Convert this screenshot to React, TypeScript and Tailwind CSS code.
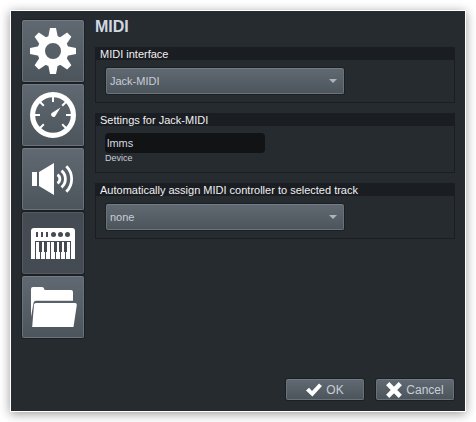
import type { ReactNode } from "react";

const frame = "rounded-[2px] border shadow-[0_0_0_1px_#1c2024]";
const raised = `${frame} border-[#6b737a] border-t-[#747c83] bg-linear-to-b from-[#606871] to-[#4d555c]`;
const pressed = `${frame} border-[#555b61] bg-[#454b52]`;

function Gear() {
  return (
    <svg width="46" height="46" viewBox="-23 -23 46 46" fill="#fff">
      {[0, 45, 90, 135, 180, 225, 270, 315].map((a) => (
        <path key={a} d="M-5-13L-3-23H3L5-13Z" transform={`rotate(${a})`} />
      ))}
      <circle r="11.8" fill="none" stroke="#fff" strokeWidth="7.6" />
    </svg>
  );
}

function Gauge() {
  return (
    <svg width="46" height="46" viewBox="-23 -23 46 46" fill="#fff">
      <circle r="20.4" fill="none" stroke="#fff" strokeWidth="5.2" />
      {[-135, -90, -45, 0, 45, 90, 135].map((a) => (
        <path key={a} d="M0-19V-13" stroke="#fff" strokeWidth="2" transform={`rotate(${a})`} />
      ))}
      <path d="M7.5-7.5L2.2 1.2A2.4 2.4 0 1 1-1.3-2.1Z" />
    </svg>
  );
}

function Speaker() {
  return (
    <svg width="44" height="34" viewBox="0 0 44 34" fill="#fff">
      <path d="M1 10H6V24H1ZM8 10L23 1V33L8 24Z" />
      <g fill="none" stroke="#fff" strokeWidth="2.8">
        <path d="M26.4 12.8A4.8 4.8 0 0 1 26.4 21.2" />
        <path d="M30.5 8.6A11 11 0 0 1 30.5 25.4" />
        <path d="M35.3 4.2A18 18 0 0 1 35.3 29.8" />
      </g>
    </svg>
  );
}

function Keyboard() {
  return (
    <svg width="44" height="31" viewBox="0 0 44 31">
      <path d="M0 31V3Q0 0 3 0H41Q44 0 44 3V31Z" fill="#fff" />
      <g fill="#454b52">
        <path d="M5 4H7V9H5ZM10 4H12V9H10ZM15 4H17V9H15Z" />
        <circle cx="22.5" cy="6.5" r="2.5" />
        <circle cx="29.5" cy="6.5" r="2.5" />
        <circle cx="36.5" cy="6.5" r="2.5" />
        <path d="M4 13H40V14H4ZM4 13H5V31H4ZM39 13H40V31H39Z" />
        <path d="M8 14H11V24H8ZM13 14H16V24H13ZM23 14H26V24H23ZM28 14H31V24H28ZM33 14H36V24H33Z" />
        <path d="M9 24H10V31H9ZM14 24H15V31H14ZM19 14H20V31H19ZM24 24H25V31H24ZM29 24H30V31H29ZM34 24H35V31H34Z" />
      </g>
    </svg>
  );
}

function Folder() {
  return (
    <svg className="ml-0.5" width="46" height="41" viewBox="0 0 46 41" fill="#fff">
      <path d="M0 30V2Q0 0 2 0H11Q13 0 13.5 3H40Q42 3 42 5V13.7H5Q3 13.7 2.5 16Z" />
      <path d="M1.2 40L3 17.5Q3.2 16 5 16H44Q46 16 45.8 18L42.5 40Z" />
    </svg>
  );
}

function Tab({ active, label, children }: { active?: boolean; label: string; children: ReactNode }) {
  return (
    <button
      aria-label={label}
      className={`flex h-[62px] w-[62px] items-center justify-center ${active ? pressed : raised}`}
    >
      {children}
    </button>
  );
}

function Group({ title, height, children }: { title: string; height: string; children: ReactNode }) {
  return (
    <section className={`border border-[#1a1d21] ${height}`}>
      <h2 className="h-3 bg-[#1a1d21] pl-1 text-[11px] leading-[13px] whitespace-nowrap text-[#f0f0f2]">{title}</h2>
      {children}
    </section>
  );
}

function Combo({ value }: { value: string }) {
  return (
    <div className={`mt-2 ml-2.5 flex h-[26px] w-[238px] items-center justify-between pr-1.5 pl-[3px] text-[11px] text-[#c8cdd9] ${raised}`}>
      <span>{value}</span>
      <svg width="8" height="4" viewBox="0 0 8 4" fill="#adb4bb">
        <path d="M0 0H8L4 4Z" />
      </svg>
    </div>
  );
}

export default function App() {
  return (
    <div className="h-[422px] w-[476px] overflow-hidden bg-white p-[11px] font-['Liberation_Sans',Arial,sans-serif]">
      <div className="flex h-[400px] w-[454px] flex-col bg-[#262b2f] shadow-[0_0_0_1px_#fff,0_2px_10px_1px_rgba(0,0,0,0.4)]">
        <div className="flex h-[368px] pt-[9px] pr-2.5 pl-[11px]">
          <nav className="flex w-[73px] shrink-0 flex-col gap-0.5">
            <Tab label="General"><Gear /></Tab>
            <Tab label="Performance"><Gauge /></Tab>
            <Tab label="Audio"><Speaker /></Tab>
            <Tab label="MIDI" active><Keyboard /></Tab>
            <Tab label="Paths"><Folder /></Tab>
          </nav>
          <main className="flex-1">
            <h1 className="h-[27px] text-base leading-[14px] font-bold text-[#d1d8e4]">MIDI</h1>
            <div className="flex flex-col gap-2.5">
              <Group title="MIDI interface" height="h-14">
                <Combo value="Jack-MIDI" />
              </Group>
              <Group title="Settings for Jack-MIDI" height="h-[60px]">
                <div className="mt-[7px] ml-[9px] h-5 w-40 rounded-[4px] bg-[#111314] pl-0.5 text-[11px] leading-5 text-[#d1d8e4]">lmms</div>
                <div className="ml-[9px] text-[9px] leading-[10px] text-[#c8cdd9]">Device</div>
              </Group>
              <Group title="Automatically assign MIDI controller to selected track" height="h-14">
                <Combo value="none" />
              </Group>
            </div>
          </main>
        </div>
        <div className="flex justify-end gap-3 pr-[11px] text-xs text-[#c8cdd9]">
          <button className={`flex h-[21px] w-[78px] items-center justify-center gap-1 ${raised}`}>
            <svg width="16" height="14" viewBox="0 0 16 14" fill="#fff">
              <path d="M0 7.5L3 4.8L6 8L13 0.5L16 3L6.4 13.5Z" />
            </svg>
            OK
          </button>
          <button className={`flex h-[21px] w-[78px] items-center justify-center gap-1 ${raised}`}>
            <svg width="16" height="16" viewBox="0 0 16 16" fill="none" stroke="#fff" strokeWidth="4.6">
              <path d="M1.7 1.7L14.3 14.3M14.3 1.7L1.7 14.3" />
            </svg>
            Cancel
          </button>
        </div>
      </div>
    </div>
  );
}
